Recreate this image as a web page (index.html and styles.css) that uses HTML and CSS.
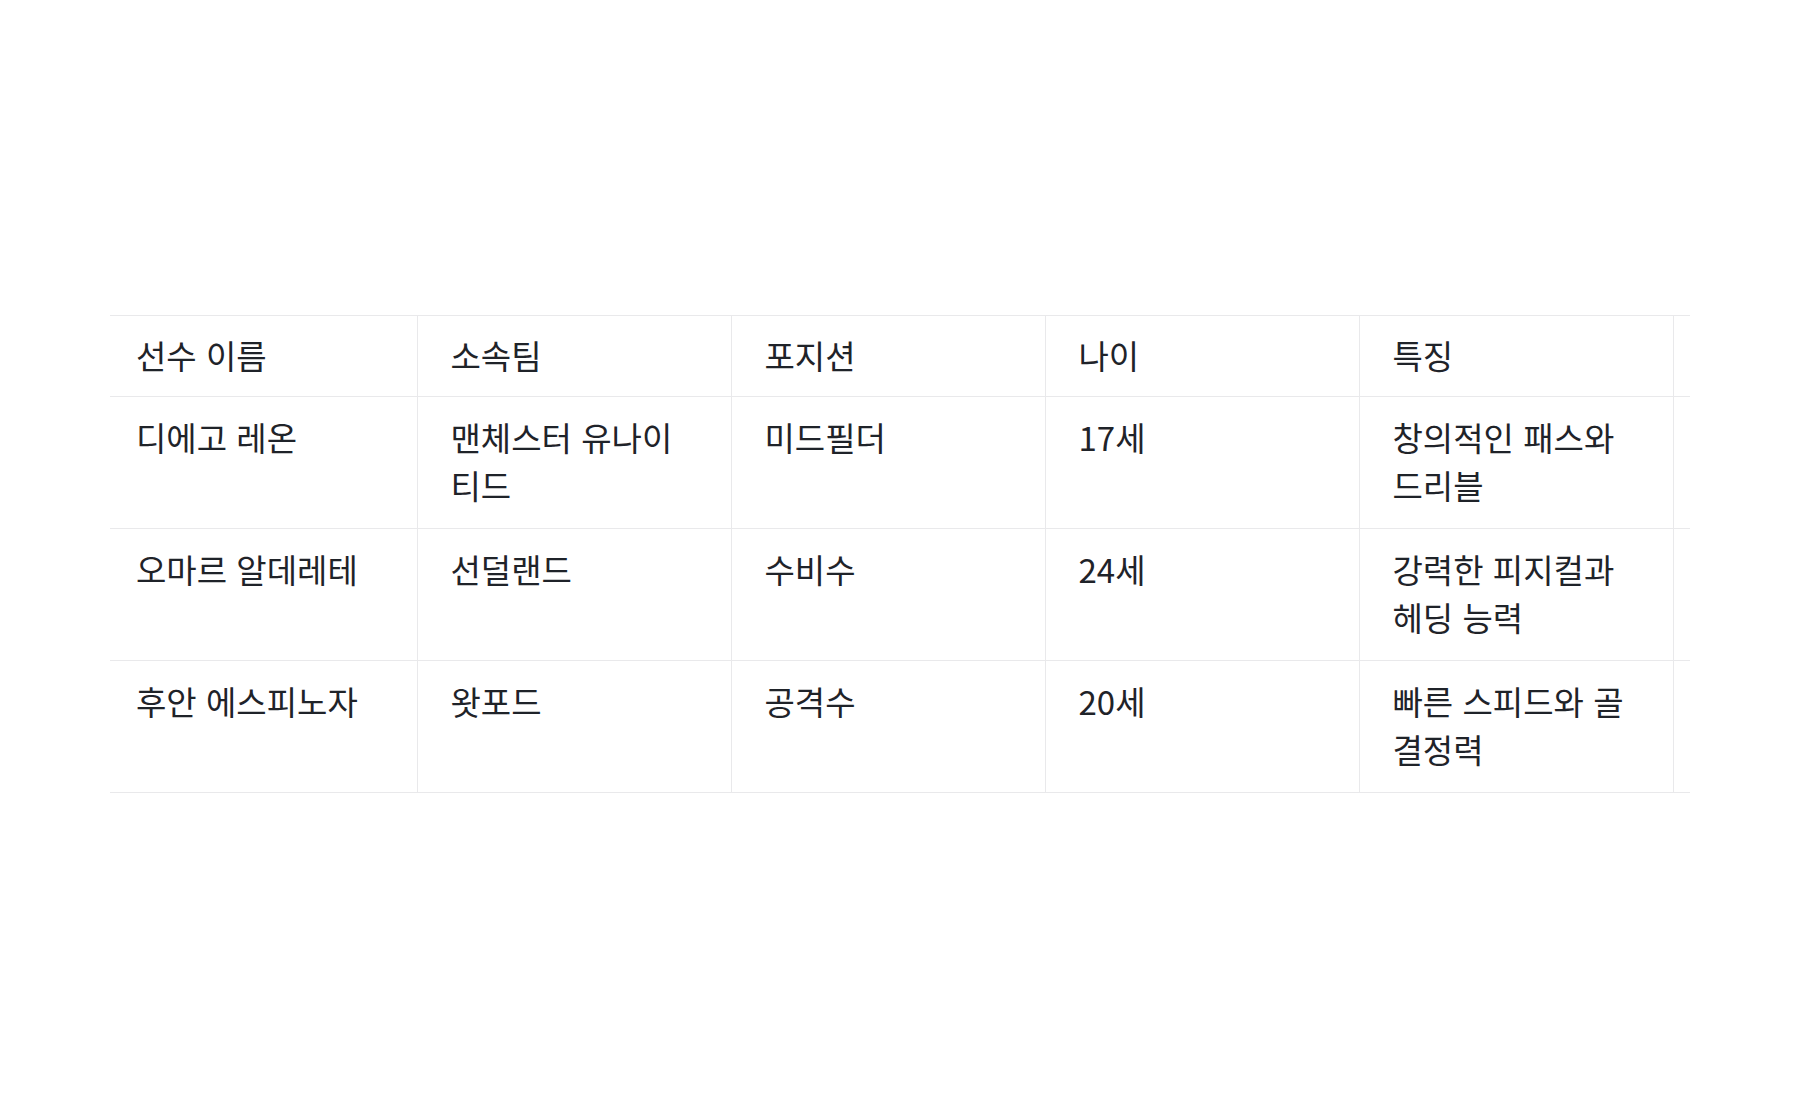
FILE: index.html
```html
<!DOCTYPE html>
<html lang="ko">
<head>
<meta charset="utf-8">
<title>선수 정보</title>
<link rel="stylesheet" href="styles.css">
</head>
<body>
<main class="page">
  <div class="table-wrap">
    <table class="players">
      <thead>
        <tr>
          <th>선수 이름</th>
          <th>소속팀</th>
          <th>포지션</th>
          <th>나이</th>
          <th>특징</th>
          <th class="extra"></th>
        </tr>
      </thead>
      <tbody>
        <tr>
          <td>디에고 레온</td>
          <td>맨체스터 유나이티드</td>
          <td>미드필더</td>
          <td>17세</td>
          <td>창의적인 패스와 드리블</td>
          <td class="extra"></td>
        </tr>
        <tr>
          <td>오마르 알데레테</td>
          <td>선덜랜드</td>
          <td>수비수</td>
          <td>24세</td>
          <td>강력한 피지컬과 헤딩 능력</td>
          <td class="extra"></td>
        </tr>
        <tr>
          <td>후안 에스피노자</td>
          <td>왓포드</td>
          <td>공격수</td>
          <td>20세</td>
          <td>빠른 스피드와 골 결정력</td>
          <td class="extra"></td>
        </tr>
      </tbody>
    </table>
  </div>
</main>
</body>
</html>
```

FILE: styles.css
```css
html, body {
  margin: 0;
  padding: 0;
  background: #ffffff;
}

body {
  font-family: "Noto Sans CJK KR", "Noto Sans", sans-serif;
  color: #1f2329;
}

.page {
  padding: 315px 110px 0 110px;
}

.table-wrap {
  width: 1580px;
  overflow: hidden;
}

.players {
  border-collapse: collapse;
  table-layout: fixed;
  width: 1884px;
  margin-left: -7px;
  font-size: 33px;
  line-height: 48px;
  border-top: 1px solid #e9e9eb;
}

.players th,
.players td {
  width: 314px;
  text-align: left;
  vertical-align: top;
  font-weight: 400;
  border-bottom: 1px solid #e9e9eb;
  border-right: 1px solid #e9e9eb;
  box-sizing: border-box;
}

.players th {
  padding: 15px 32px 17px 33px;
}

.players td {
  padding: 16px 32px 19px 33px;
}

.players .extra {
  border-right: none;
}
```
